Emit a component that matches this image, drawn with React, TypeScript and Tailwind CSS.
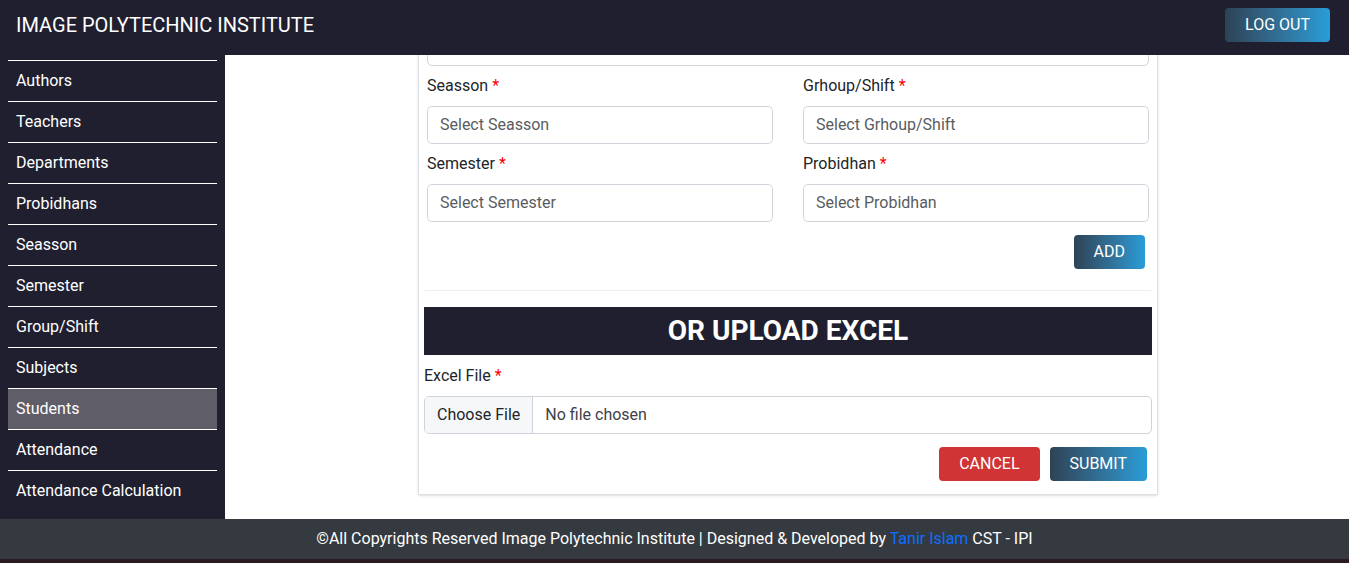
const menu = [
  "Authors",
  "Teachers",
  "Departments",
  "Probidhans",
  "Seasson",
  "Semester",
  "Group/Shift",
  "Subjects",
  "Students",
  "Attendance",
  "Attendance Calculation",
];

function Field({ label, placeholder }: { label: string; placeholder: string }) {
  return (
    <div>
      <label className="block mb-2 leading-6 text-[16px] text-[#212529]">
        {label} <span className="text-[#ff0000]">*</span>
      </label>
      <div className="h-[38px] border border-[#ced4da] rounded-[5px] px-3 flex items-center text-[16px] text-[#595c5f]">
        {placeholder}
      </div>
    </div>
  );
}

export default function App() {
  return (
    <div className="w-full font-['Roboto',sans-serif]">
      <header className="h-[55px] bg-[#201f2f] flex items-start justify-between pl-4 pr-[19px] pt-2">
        <h1 className="text-white text-[20px] leading-7 mt-[3px]">IMAGE POLYTECHNIC INSTITUTE</h1>
        <button className="h-[34px] px-5 rounded-[4px] bg-linear-to-r from-[#2d4356] to-[#279dd8] text-white text-[16px]">
          LOG OUT
        </button>
      </header>

      <div className="flex h-[464px]">
        <aside className="w-[225px] shrink-0 bg-[#201f2f] pt-[5px] px-2">
          {menu.map((m) => (
            <div
              key={m}
              className={
                "h-[41px] pl-2 flex items-center text-white text-[16px] border-t border-white " +
                (m === "Students" ? "bg-[#5f5e68]" : "")
              }
            >
              {m}
            </div>
          ))}
        </aside>

        <main className="flex-1 bg-white overflow-hidden flex justify-center pl-[2px]">
          <div className="w-[740px] -mt-[36px] self-start border border-[#dee2e6] shadow-sm bg-white pb-[13px]">
            <div className="px-2 pt-2">
              <div className="h-[38px] border border-[#ced4da] rounded-[5px]"></div>
              <div className="grid grid-cols-2 gap-x-[30px] gap-y-2 mt-2">
                <Field label="Seasson" placeholder="Select Seasson" />
                <Field label="Grhoup/Shift" placeholder="Select Grhoup/Shift" />
                <Field label="Semester" placeholder="Select Semester" />
                <Field label="Probidhan" placeholder="Select Probidhan" />
              </div>
              <div className="flex justify-end mt-[13px] pr-1">
                <button className="h-[34px] px-5 rounded-[4px] bg-linear-to-r from-[#2d4356] to-[#279dd8] text-white text-[16px]">
                  ADD
                </button>
              </div>
            </div>

            <div className="mx-[6px] mt-[21px] h-px bg-[#eeeeee]"></div>

            <div className="px-[5px]">
              <div className="mt-4 h-[48px] bg-[#201f2f] flex items-center justify-center text-white font-bold text-[28px]">
                OR UPLOAD EXCEL
              </div>
              <label className="block mt-[9px] mb-2 leading-6 text-[16px] text-[#212529]">
                Excel File <span className="text-[#ff0000]">*</span>
              </label>
              <div className="h-[38px] border border-[#ced4da] rounded-[5px] flex text-[16px] overflow-hidden">
                <div className="bg-[#f6f7f9] border-r border-[#ced4da] px-3 flex items-center text-[#212529]">
                  Choose File
                </div>
                <div className="px-3 flex items-center text-[#3d4247]">No file chosen</div>
              </div>
              <div className="flex justify-end gap-[10px] mt-[13px] pr-[5px]">
                <button className="h-[34px] px-5 rounded-[4px] bg-[#d03434] text-white text-[16px]">CANCEL</button>
                <button className="h-[34px] px-5 rounded-[4px] bg-linear-to-r from-[#2d4356] to-[#279dd8] text-white text-[16px]">
                  SUBMIT
                </button>
              </div>
            </div>
          </div>
        </main>
      </div>

      <footer className="h-[40px] bg-[#343a40] flex items-center justify-center text-white text-[16px]">
        <p>
          ©All Copyrights Reserved Image Polytechnic Institute | Designed &amp; Developed by{" "}
          <span className="text-[#0d6efd]">Tanir Islam</span> CST - IPI
        </p>
      </footer>
      <div className="h-[4px] bg-[#2b1a21]"></div>
    </div>
  );
}
